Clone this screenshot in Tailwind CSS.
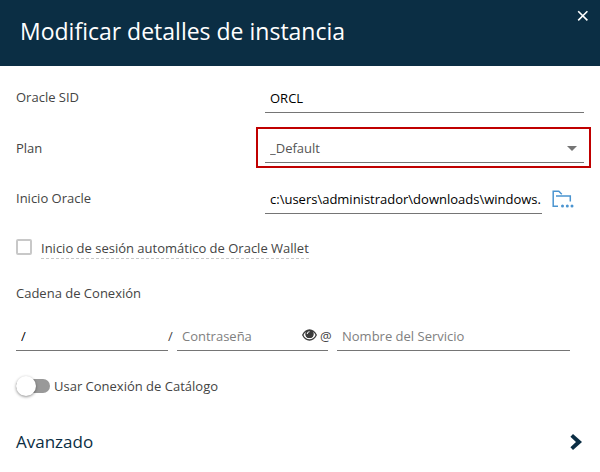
<!DOCTYPE html>
<html lang="es">
<head>
  <meta charset="UTF-8">
  <meta name="viewport" content="width=device-width, initial-scale=1.0">
  <title>Modificar detalles de instancia</title>
  <script src="https://cdn.jsdelivr.net/npm/@tailwindcss/browser@4"></script>
</head>
<body class="bg-white font-['Open_Sans','Noto_Sans',sans-serif] text-[13px] leading-5 text-[#444]">
  <!-- Header -->
  <header class="relative flex items-center h-[66px] px-5 bg-[#0b2e44]">
    <h1 class="text-[23px] leading-7 pb-1 text-white">Modificar detalles de instancia</h1>
    <button type="button" aria-label="Cerrar" class="absolute top-1 right-1.5 p-1 text-white">
      <svg class="block size-4" viewBox="0 0 16 16" fill="none" stroke="currentColor" stroke-width="1.6">
        <path d="M4.200 3.200l9.200 9.200M13.400 3.200L4.200 12.400"/>
      </svg>
    </button>
  </header>

  <form class="px-4 pt-[15px]">
    <!-- Instance fields -->
    <div class="grid grid-cols-[249px_1fr] items-center gap-y-[18px]">
      <label for="sid">Oracle SID</label>
      <input id="sid" type="text" value="ORCL" class="w-full h-8 px-[5px] pt-0.5 border-b border-[#757575] text-black outline-none">

      <label for="plan">Plan</label>
      <div class="-ml-[9px] -mr-[7px] -my-1 pl-[7px] pr-[5px] pt-[2px] pb-[3px] border-2 border-[#c00000]">
        <div class="relative">
          <select id="plan" class="block appearance-none w-full h-8 px-[5px] pt-0.5 border-b border-[#757575] text-[#555] outline-none">
            <option>_Default</option>
          </select>
          <svg class="absolute right-[7px] top-[15px] w-[10px] h-[5px] pointer-events-none" viewBox="0 0 10 5" fill="#757575"><path d="M0 0h10L5 5z"/></svg>
        </div>
      </div>

      <label for="home">Inicio Oracle</label>
      <div class="flex items-center gap-2">
        <input id="home" type="text" value="c:\users\administrador\downloads\windows." class="flex-1 min-w-0 h-8 pl-[5px] pt-0.5 border-b border-[#757575] text-black outline-none">
        <button type="button" aria-label="Examinar" class="w-[34px] pl-[2px] pt-0.5">
          <svg class="block w-[22px] h-[18px]" viewBox="0 0 22 18" fill="none" stroke="#4a94d0" stroke-width="1.5">
            <path d="M6 16.200H1.200V1.200h5.600l3 3M4 6h14.300v5.500"/>
            <g fill="#4a94d0" stroke="none"><circle cx="10.500" cy="16" r="1.500"/><circle cx="15.300" cy="16" r="1.500"/><circle cx="20" cy="16" r="1.500"/></g>
          </svg>
        </button>
      </div>
    </div>

    <!-- Wallet -->
    <div class="flex items-center gap-[9px] mt-6">
      <input id="wallet" type="checkbox" class="appearance-none size-4 mb-1 border-2 border-[#c8c8c8] rounded-[2px] checked:bg-[#0b2e44]">
      <label for="wallet" class="border-b border-dashed border-[#c8c8c8]">Inicio de sesión automático de Oracle Wallet</label>
    </div>

    <!-- Connection string -->
    <fieldset class="mt-6">
      <legend class="mb-4">Cadena de Conexión</legend>
      <div class="flex items-center pr-[14px]">
        <input type="text" value="/" aria-label="Usuario" class="w-[152px] h-8 px-[5px] pt-0.5 border-b border-[#757575] text-black outline-none">
        <span class="w-[9px] pt-0.5">/</span>
        <div class="flex items-center w-[151px] h-8 border-b border-[#757575]">
          <input type="password" placeholder="Contraseña" aria-label="Contraseña" class="flex-1 min-w-0 px-[5px] pt-0.5 placeholder:text-[#808080] outline-none">
          <button type="button" aria-label="Mostrar contraseña" class="w-[15px] mr-[11px]">
            <svg class="block w-[15px] h-[12px]" viewBox="0 0 15 12">
              <path fill="#3c3c3c" fill-rule="evenodd" d="M0 6C1.800 2.400 4.400.300 7.500.300S13.200 2.400 15 6c-1.800 3.600-4.400 5.700-7.500 5.700S1.800 9.600 0 6zM1.500 6C2.400 8.500 4.600 10.300 7.500 10.300S12.600 8.500 13.500 6C13 4.600 12.100 3.500 11 2.700 12.300 6.700 10.500 9 7.500 9S2.700 6.700 4 2.700C2.900 3.500 2 4.600 1.500 6z"/>
              <circle cx="7.500" cy="5" r="4" fill="#3c3c3c"/>
              <path d="M5.200 5a2.300 2.300 0 0 1 2.300-2.300" fill="none" stroke="#fff" stroke-width="1"/>
            </svg>
          </button>
        </div>
        <span class="w-[9px] pt-0.5"><span class="-ml-2">@</span></span>
        <input type="text" placeholder="Nombre del Servicio" aria-label="Nombre del Servicio" class="flex-1 min-w-0 h-8 px-[5px] pt-0.5 border-b border-[#757575] placeholder:text-[#808080] outline-none">
      </div>
    </fieldset>

    <!-- Catalog switch -->
    <label class="flex items-center gap-1 mt-[25px]">
      <input type="checkbox" role="switch" class="appearance-none relative w-[34px] h-[14px] rounded-full bg-[#999] before:absolute before:-top-[3px] before:left-0 before:size-5 before:rounded-full before:bg-white before:shadow-[0_1px_3px_rgba(0,0,0,0.45)] checked:before:left-[14px]">
      <span>Usar Conexión de Catálogo</span>
    </label>

    <!-- Advanced -->
    <button type="button" class="flex items-center justify-between w-full mt-8 pr-[2px] text-[17px] leading-7 text-[#0b2e44]">
      Avanzado
      <svg class="w-3 h-4" viewBox="0 0 12 16" fill="#0b2e44"><path d="M3 0l9 8-9 8L.4 13.200 6 8 .4 2.800z"/></svg>
    </button>
  </form>
</body>
</html>
